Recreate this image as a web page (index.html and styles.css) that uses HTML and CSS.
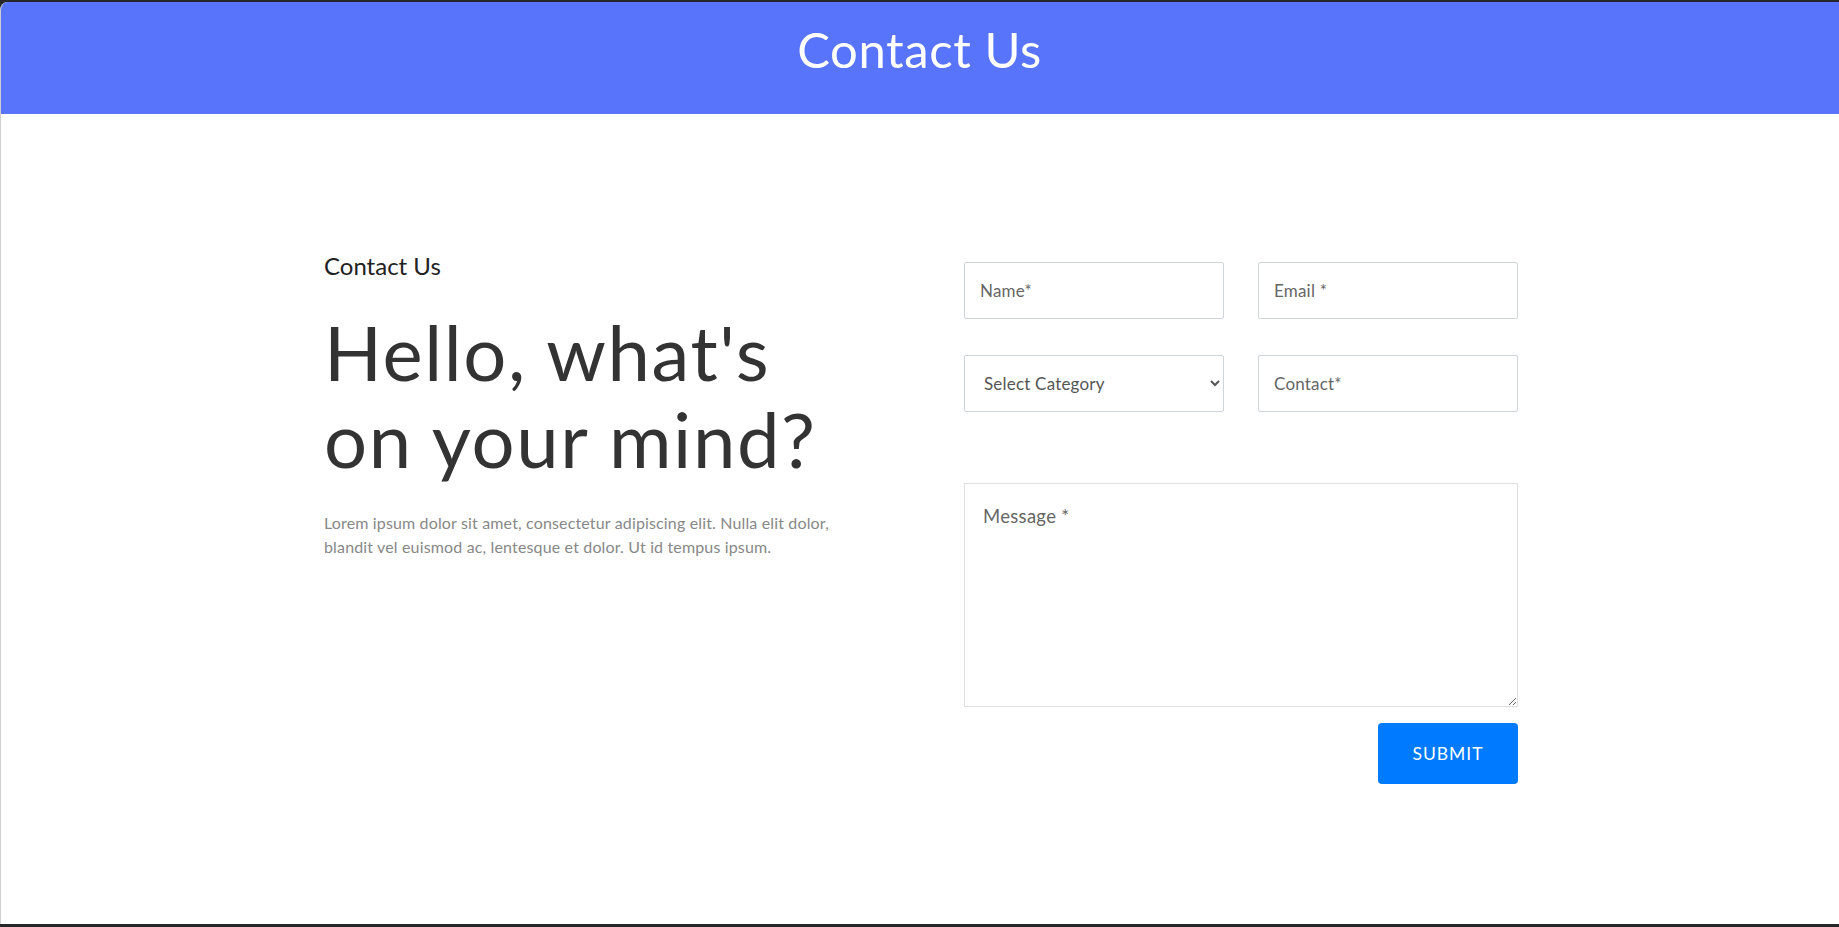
FILE: index.html
```html
<!DOCTYPE html>
<html lang="en">
<head>
<meta charset="utf-8">
<title>Contact Us</title>
<link rel="stylesheet" href="styles.css">
</head>
<body>
<div class="window">
  <header class="topbar">
    <h1 class="topbar-title">Contact Us</h1>
  </header>
  <main class="contact">
    <div class="contact-inner">
      <section class="intro">
        <h5 class="intro-label">Contact Us</h5>
        <h2 class="intro-title">Hello, what's<br>on your mind?</h2>
        <p class="intro-text">Lorem ipsum dolor sit amet, consectetur adipiscing elit. Nulla elit dolor, blandit vel euismod ac, lentesque et dolor. Ut id tempus ipsum.</p>
      </section>
      <form class="form">
        <div class="form-grid">
          <input class="field" type="text" placeholder="Name*">
          <input class="field" type="email" placeholder="Email *">
          <select class="field field-select">
            <option>Select Category</option>
          </select>
          <input class="field" type="text" placeholder="Contact*">
        </div>
        <textarea class="field field-message" placeholder="Message *"></textarea>
        <div class="form-actions">
          <button class="submit" type="button">SUBMIT</button>
        </div>
      </form>
    </div>
  </main>
</div>
</body>
</html>
```
FILE: styles.css
```css
* { box-sizing: border-box; }

html, body {
  margin: 0;
  padding: 0;
  height: 100%;
}

body {
  background: #25272a;
  font-family: "Lato", "Open Sans", sans-serif;
  color: #333;
  overflow: hidden;
}

.window {
  margin-top: 2px;
  height: 922px;
  background: #fff;
  border-left: 1px solid #cfcfcf;
  border-top-left-radius: 8px;
  overflow: hidden;
  display: flex;
  flex-direction: column;
}

.topbar {
  background: #5774fa;
  height: 112px;
  margin-left: -1px;
  padding-top: 19px;
  text-align: center;
}

.topbar-title {
  margin: 0;
  color: #fff;
  font-weight: 400;
  font-size: 49px;
  line-height: 56px;
  letter-spacing: 0.6px;
}

.contact {
  flex: 1;
  padding-top: 137px;
}

.contact-inner {
  width: 1194px;
  margin: 0 auto;
  padding-left: 1px;
  display: flex;
  justify-content: space-between;
  align-items: flex-start;
}

.intro {
  width: 540px;
}

.intro-label {
  margin: 0;
  font-size: 24px;
  line-height: 30px;
  font-weight: 400;
  color: #222;
}

.intro-title {
  margin: 27px 0 0;
  font-size: 76px;
  line-height: 87px;
  font-weight: 400;
  color: #333;
  letter-spacing: 1.6px;
}

.intro-text {
  margin: 29px 0 0;
  font-size: 16px;
  line-height: 24px;
  letter-spacing: 0.15px;
  color: #888;
  width: 525px;
}

.form {
  width: 554px;
  margin-right: -1px;
  padding-top: 11px;
}

.form-grid {
  display: grid;
  grid-template-columns: 260px 260px;
  column-gap: 34px;
  row-gap: 36px;
}

.field {
  display: block;
  width: 100%;
  height: 57px;
  border: 1px solid #ced4da;
  border-radius: 2px;
  padding: 0 15px;
  font-family: "Lato", "Open Sans", sans-serif;
  font-size: 17px;
  letter-spacing: 0.2px;
  color: #555;
  background: #fff;
  outline: none;
}

.field::placeholder {
  color: #666;
}

.field-select {
  padding-left: 15px;
  color: #555;
}

.field-message {
  margin-top: 71px;
  height: 224px;
  border-color: #dfdfdf;
  border-radius: 0;
  padding: 20px 18px;
  font-size: 18.5px;
  letter-spacing: 0.3px;
  line-height: 24px;
  resize: both;
}

.form-actions {
  display: flex;
  justify-content: flex-end;
  margin-top: 16px;
}

.submit {
  width: 140px;
  height: 61px;
  border: none;
  border-radius: 4px;
  background: #007bff;
  color: #fff;
  font-family: "Lato", "Open Sans", sans-serif;
  font-size: 17.5px;
  letter-spacing: 1px;
  cursor: pointer;
}
```
